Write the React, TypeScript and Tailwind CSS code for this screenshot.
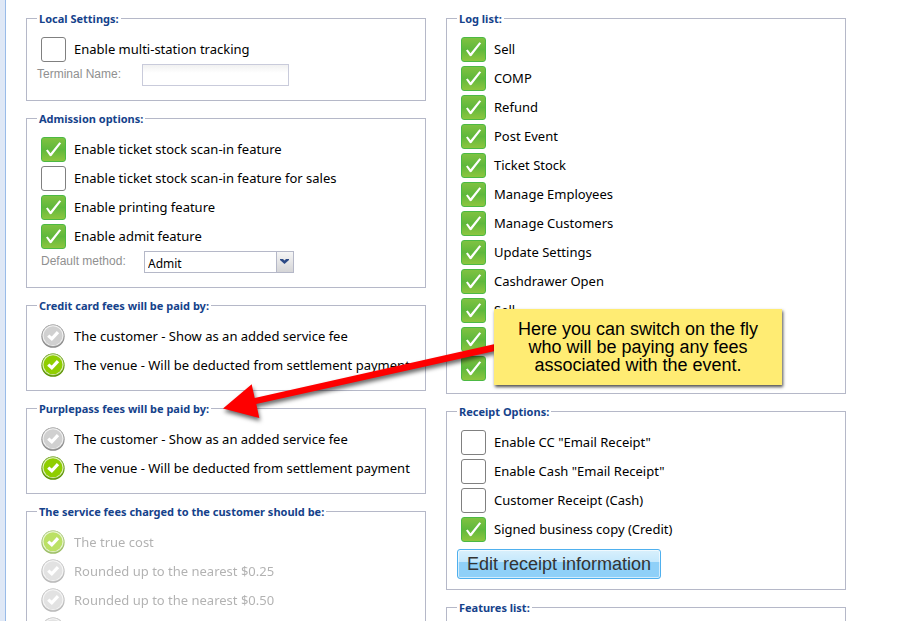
import React, { useId } from "react";

const logItems = [
  "Sell",
  "COMP",
  "Refund",
  "Post Event",
  "Ticket Stock",
  "Manage Employees",
  "Manage Customers",
  "Update Settings",
  "Cashdrawer Open",
  "Sell",
  "",
  "",
];

const receiptItems = [
  { label: 'Enable CC "Email Receipt"', checked: false },
  { label: 'Enable Cash "Email Receipt"', checked: false },
  { label: "Customer Receipt (Cash)", checked: false },
  { label: "Signed business copy (Credit)", checked: true },
];

const payers = [
  "The customer - Show as an added service fee",
  "The venue - Will be deducted from settlement payment",
];

const roundings = [
  "The true cost",
  "Rounded up to the nearest $0.25",
  "Rounded up to the nearest $0.50",
  "",
];

function Group({ title, children }: { title: string; children?: React.ReactNode }) {
  return (
    <fieldset className="min-w-0 border border-[#b5b8c8] px-[10px] pb-[10px]">
      <legend className="px-[2px] text-[11px] leading-[15px] font-bold text-[#15428b]">
        {title}
      </legend>
      <div className="pt-[9px]">{children}</div>
    </fieldset>
  );
}

function CheckRow({ label, checked }: { label: string; checked?: boolean }) {
  return (
    <label className="flex h-[29px] items-center gap-2 pl-1">
      <span className="grid shrink-0">
        <input
          type="checkbox"
          defaultChecked={checked}
          className="peer size-[25px] appearance-none rounded-[3px] border border-[#808080] bg-white [grid-area:1/1] checked:border-[#4cb944] checked:bg-linear-to-b checked:from-[#7fc241] checked:via-[#5fb83c] checked:to-[#8cc63f]"
        />
        <svg
          viewBox="0 0 25 25"
          className="pointer-events-none invisible size-[25px] [grid-area:1/1] peer-checked:visible"
        >
          <path
            d="M5 13.6 L6.7 12.6 L9.5 16.2 L18.4 5.3 L20.2 6.2 L10.4 19 L9 19.2 Z"
            fill="#fff"
          />
        </svg>
      </span>
      <span>{label}</span>
    </label>
  );
}

function RadioRow({
  label,
  name,
  checked,
  disabled,
}: {
  label: string;
  name: string;
  checked?: boolean;
  disabled?: boolean;
}) {
  return (
    <label className="flex h-[29px] items-center gap-2 pl-1 has-disabled:opacity-60">
      <span className="grid shrink-0 text-[#d0d0d0] has-checked:text-[#8fce00]">
        <input
          type="radio"
          name={name}
          defaultChecked={checked}
          disabled={disabled}
          className="size-[25px] appearance-none [grid-area:1/1]"
        />
        <svg viewBox="0 0 25 25" className="pointer-events-none size-[25px] [grid-area:1/1]">
          <circle cx="12" cy="12.2" r="11.6" fill={checked ? "#5c9400" : "#8a8a8a"} />
          <circle cx="12" cy="11.5" r="11" fill={checked ? "#8fb850" : "#b4b4b4"} />
          <circle cx="12" cy="11.7" r="10.4" fill={checked ? "#e6f3c4" : "#f4f4f4"} />
          <circle cx="12" cy="11.8" r="9.5" fill="currentColor" />
          <path d="M7.2 11.6 L10.8 14.8 L17 8.2" fill="none" stroke="#fff" strokeWidth="3.2" />
        </svg>
      </span>
      <span className={disabled ? "text-[#808080]" : ""}>{label}</span>
    </label>
  );
}

function PayerGroup({ title }: { title: string }) {
  const name = useId();
  return (
    <Group title={title}>
      {payers.map((payer, index) => (
        <RadioRow key={payer} label={payer} name={name} checked={index === 1} />
      ))}
    </Group>
  );
}

function Annotation() {
  return (
    <>
      <svg
        viewBox="0 0 290 90"
        className="pointer-events-none absolute top-[336px] left-[216px] h-[90px] w-[290px] drop-shadow-[1px_3px_2px_rgba(0,0,0,0.6)]"
      >
        <path
          d="M7 72.5 L35.7 48.3 L38.7 62 L279 8 V15 L40.3 68 L43.3 82 Z"
          fill="#fe0000"
        />
      </svg>
      <p className="absolute top-[309px] left-[494px] w-[288px] bg-[#ffec73] px-5 py-[11px] text-center font-['Liberation_Sans',sans-serif] text-[18px] leading-[18px] shadow-[1px_2px_3px_0px_rgba(0,0,0,0.7)]">
        Here you can switch on the fly
        <br />
        who will be paying any fees
        <br />
        associated with the event.
      </p>
    </>
  );
}

export default function App() {
  return (
    <main className="relative flex h-screen overflow-hidden bg-white font-['Noto_Sans','Open_Sans',sans-serif] text-[13px] leading-[17px] text-black">
      <div className="w-[6px] shrink-0 border-r border-[#99bbe8] bg-[#dfe8f6]" />
      <div className="grid flex-1 grid-cols-[minmax(0,400px)_minmax(0,400px)] items-start gap-5 px-5 pt-[11px]">
        <div className="flex flex-col gap-[10px]">
          <Group title="Local Settings:">
            <CheckRow label="Enable multi-station tracking" />
            <div className="flex pb-1 font-['Liberation_Sans',sans-serif] text-[12px] leading-[20px] text-[#909090]">
              <label htmlFor="terminal" className="w-[105px]">
                Terminal Name:
              </label>
              <input
                id="terminal"
                type="text"
                className="h-[22px] w-[147px] border border-[#c9cbdb] bg-linear-to-b from-[#f1f1f1] to-white to-40% px-1 text-black"
              />
            </div>
          </Group>
          <Group title="Admission options:">
            <CheckRow label="Enable ticket stock scan-in feature" checked />
            <CheckRow label="Enable ticket stock scan-in feature for sales" />
            <CheckRow label="Enable printing feature" checked />
            <CheckRow label="Enable admit feature" checked />
            <div className="flex pb-1 pl-1">
              <label
                htmlFor="method"
                className="w-[103px] font-['Liberation_Sans',sans-serif] text-[12px] leading-[20px] text-[#909090]"
              >
                Default method:
              </label>
              <span className="grid">
                <select
                  id="method"
                  className="h-[22px] w-[150px] appearance-none border border-[#b5b8c8] bg-white px-[3px] pt-[2px] text-[12px] [grid-area:1/1]"
                >
                  <option>Admit</option>
                </select>
                <svg
                  viewBox="0 0 18 22"
                  className="pointer-events-none h-[22px] w-[18px] justify-self-end [grid-area:1/1]"
                >
                  <defs>
                    <linearGradient id="trigger" x1="0" y1="0" x2="0" y2="1">
                      <stop offset="0" stopColor="#f6f6f6" />
                      <stop offset="1" stopColor="#d4d4d6" />
                    </linearGradient>
                  </defs>
                  <rect x="0.5" y="0.5" width="17" height="21" fill="url(#trigger)" stroke="#b5b8c8" />
                  <path d="M4 8h3l1.500 1.500L10 8h3v1l-4.500 4L4 9z" fill="#2c4a86" />
                </svg>
              </span>
            </div>
          </Group>
          <PayerGroup title="Credit card fees will be paid by:" />
          <PayerGroup title="Purplepass fees will be paid by:" />
          <Group title="The service fees charged to the customer should be:">
            {roundings.map((rounding, index) => (
              <RadioRow
                key={index}
                label={rounding}
                name="rounding"
                checked={index === 0}
                disabled
              />
            ))}
          </Group>
        </div>
        <div className="flex flex-col gap-[10px]">
          <Group title="Log list:">
            {logItems.map((item, index) => (
              <CheckRow key={index} label={item} checked />
            ))}
          </Group>
          <Group title="Receipt Options:">
            {receiptItems.map((item) => (
              <CheckRow key={item.label} label={item.label} checked={item.checked} />
            ))}
            <button
              type="button"
              className="mt-[5px] block h-[30px] rounded-[3px] border border-[#4fb0ee] bg-linear-to-b from-[#d9f0fc] from-0% via-[#c4e8fc] via-42% to-[#8fd0f8] to-42% px-[9px] font-['Liberation_Sans',sans-serif] text-[18px] text-[#333] shadow-[inset_0_0_0_1px_rgba(255,255,255,0.6)]"
            >
              Edit receipt information
            </button>
          </Group>
          <Group title="Features list:">
            <div className="h-20" />
          </Group>
        </div>
      </div>
      <Annotation />
    </main>
  );
}
